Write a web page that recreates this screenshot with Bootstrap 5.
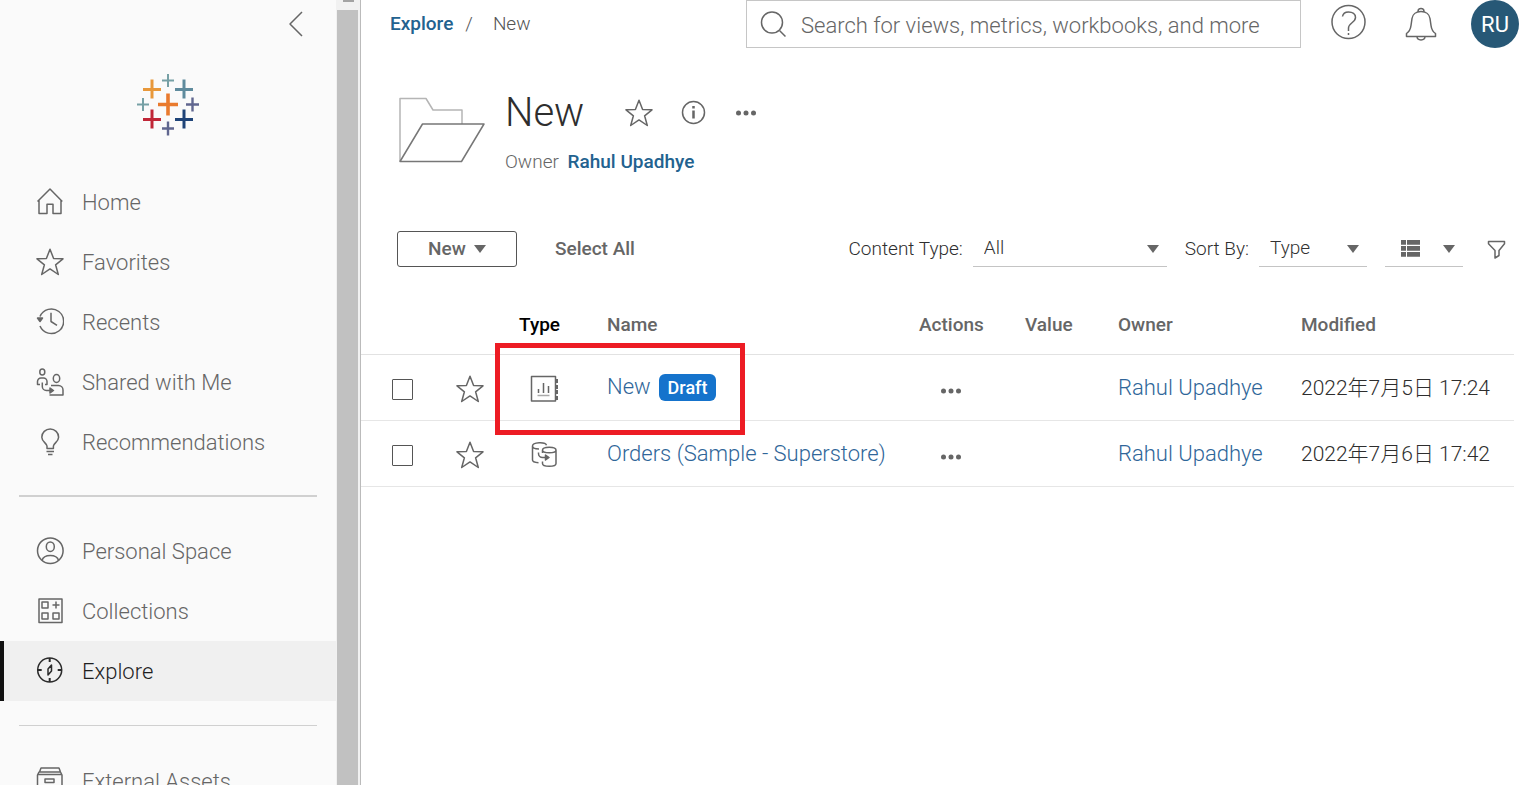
<!DOCTYPE html>
<html lang="en">
<head>
<meta charset="utf-8">
<meta name="viewport" content="width=device-width, initial-scale=1">
<title>Explore - New</title>
<link href="https://cdn.jsdelivr.net/npm/bootstrap@5.3.0/dist/css/bootstrap.min.css" rel="stylesheet">
<style>
  body { font-family: Roboto, "Noto Sans CJK JP", sans-serif; font-weight: 300; font-size: 20px; line-height: 24px; color: #2e2e2e; background: #fff; }
  a { color: #2f6699; text-decoration: none; }
  .ink { fill: none; stroke: #666; stroke-width: 1.5; stroke-linejoin: round; flex-shrink: 0; display: block; }
  .plain { background: none; border: 0; padding: 0; color: #666; }
  .shell { height: 100vh; }

  .side { width: 336px; background: #fafafa; }
  .side-head { height: 172px; padding: 10px 31px 0 18px; }
  .side-logo { margin: 35px 0 0 12px; }
  .side-link { height: 60px; padding-left: 36px; gap: 18px; color: #666; font-size: 22px; }
  .side-link span { padding-top: 2px; }
  .side-link.current { background: #f0f0f0; color: #1f1f1f; border-left: 4px solid #111; padding-left: 32px; }
  .side-link.current .ink { stroke: #2b2b2b; }
  .rule { height: 2px; margin: 23px 19px 24px; background: #d0d0d0; }
  .rule.thin { height: 1px; margin: 24px 19px 25px; }
  .track { width: 25px; background: #f1f1f1; border-right: 1px solid #bbb; }
  .track-arrow { height: 3px; width: 11px; margin: -1px 0 8px 7px; background: #a3a3a3; }
  .thumb { background: #c1c1c1; margin: 0 2px 0 1px; }

  .topbar { padding: 0 17px 0 29px; height: 48px; }
  .topbar .trail { gap: 12px; font-size: 19px; color: #555; }
  .strong-link { font-weight: 500; color: #23628f; }
  .search { flex: 0 1 555px; height: 48px; border: 1px solid #c6c6c6; padding: 0 12px; gap: 14px; }
  .search input { border: 0; outline: 0; background: none; font-size: 22px; font-weight: 300; min-width: 0; }
  .search input::placeholder { color: #666; opacity: 1; }
  .help { margin-left: 30px; }
  .bell { margin: 0 34px 0 37px; }
  .avatar { width: 48px; height: 48px; background: #275876; color: #fff; font-size: 22px; font-weight: 400; padding-top: 2px; }

  .heading { padding: 41px 36px 0 37px; gap: 19px; }
  .heading h1 { font-size: 40px; line-height: 48px; font-weight: 300; width: 80px; }
  .owner { font-size: 19px; color: #666; margin-top: 13px; }

  .tools { padding: 57px 30px 0 36px; font-size: 19px; }
  .new-btn { width: 120px; height: 36px; border: 1px solid #555; border-radius: 3px; background: #fff; }
  .semi { font-weight: 500; font-size: 19px; color: #666; }
  .select-all { margin-left: 38px; }
  .pick { appearance: none; height: 36px; margin: 0 18px 0 10px; border: 0; border-bottom: 1px solid #c4c4c4; border-radius: 0; padding: 0 24px 2px 11px; font-size: 19px; font-weight: 300; color: #333;
    background: #fff url("data:image/svg+xml,%3Csvg xmlns='http://www.w3.org/2000/svg' width='12' height='8'%3E%3Cpath d='M0 0h12L6 8z' fill='%23666'/%3E%3C/svg%3E") no-repeat right 8px center; }
  .pick-type { width: 194px; }
  .pick-sort { width: 108px; }
  .view-btn { width: 78px; height: 36px; border-bottom: 1px solid #c4c4c4; }

  .listing { margin: 27px 22px 0 0; }
  .files { table-layout: fixed; width: 100%; }
  .files th { height: 60px; padding-top: 3px; font-weight: 500; font-size: 19px; color: #666; border-bottom: 1px solid #e2e2e2; }
  .files td { height: 66px; font-size: 21px; border-bottom: 1px solid #e6e6e6; }
  .files td a { font-size: 22px; }
  .files input { appearance: none; display: block; width: 21px; height: 21px; margin: 4px auto 0; border: 1px solid #555; border-radius: 1px; background: #fff; }
  .row-dots { margin-left: 22px; }
  .files td.text-cell { padding-top: 2px; }
  .draft { background: #1573cc; color: #fff; font-size: 18px; font-weight: 500; line-height: 27px; border-radius: 6px; padding: 0 9px; }
  .callout { left: 134px; top: 49px; width: 250px; height: 92px; border: 5px solid #ed1c24; pointer-events: none; }
</style>
</head>
<body>
<svg width="0" height="0" class="position-absolute" aria-hidden="true">
  <symbol id="star" viewBox="0 0 28 28"><path d="M14 1.200l3.600 9.300 9.400.3-7.400 6 2.700 9.700-8.300-5.600-8.300 5.600 2.700-9.700-7.400-6 9.400-.3z"/></symbol>
  <symbol id="dots" viewBox="0 0 20 6"><g fill="#666" stroke="none"><circle cx="2.500" cy="3" r="2.500"/><circle cx="10" cy="3" r="2.500"/><circle cx="17.500" cy="3" r="2.500"/></g></symbol>
  <symbol id="caret" viewBox="0 0 12 8"><path d="M0 0h12L6 8z" fill="#666" stroke="none"/></symbol>
</svg>

<div class="shell d-flex overflow-hidden">
  <aside class="side flex-shrink-0">
    <div class="side-head d-flex flex-column">
      <button class="plain align-self-end" aria-label="Collapse menu"><svg class="ink" width="18" height="28" viewBox="0 0 18 28"><path d="M15 2L3 14l12 12"/></svg></button>
      <a href="#" class="side-logo align-self-center" aria-label="Tableau home">
        <svg class="d-block" width="64" height="64" viewBox="0 0 64 64" fill="none">
          <path d="M32 20.500v22M22 31.500h20" stroke="#e97a2e" stroke-width="3.600"/>
          <path d="M16 6.500v19M7 16.500h18" stroke="#e8983a" stroke-width="3"/>
          <path d="M48 6.500v19M39 16.500h18" stroke="#5f8b9d" stroke-width="3"/>
          <path d="M16 36.500v19M7 46.500h18" stroke="#c02637" stroke-width="3"/>
          <path d="M48 36.500v19M39 46.500h18" stroke="#1f4478" stroke-width="3"/>
          <path d="M32 1v13M26 7.500h12M7 25v13M1 31.500h12" stroke="#76a0a5" stroke-width="2"/>
          <path d="M56.500 24.500v14M50 31.500h13M32 48.500v14M26 55.500h12" stroke="#60668f" stroke-width="2.400"/>
        </svg>
      </a>
    </div>
    <nav>
      <a href="#" class="side-link d-flex align-items-center"><svg class="ink" width="28" height="28" viewBox="0 0 28 28"><path d="M1.500 13.500L14 1l12.300 12.500M3 12.500v13h8v-9.300h6v9.300h8v-13"/></svg><span>Home</span></a>
      <a href="#" class="side-link d-flex align-items-center"><svg class="ink" width="28" height="28"><use href="#star"/></svg><span>Favorites</span></a>
      <a href="#" class="side-link d-flex align-items-center"><svg class="ink" width="28" height="28" viewBox="0 0 28 28"><path d="M4 8.500a12.300 12.300 0 1 1 0 9.500M15 4.800V13.500l6 3.800"/><path d="M1.500 10h5L4 13.500z" fill="#666"/></svg><span>Recents</span></a>
      <a href="#" class="side-link d-flex align-items-center"><svg class="ink" width="28" height="28" viewBox="0 0 28 28"><ellipse cx="6.300" cy="4" rx="2.500" ry="3"/><path d="M4 16.500H1.500v-3a3.500 3.500 0 0 1 3.500-3.500h2.500a3.500 3.500 0 0 1 3.500 3.500v3H9M6.300 14.500v4a4 4 0 0 0 4 4H16"/><path d="M14 20l3.500 2.500L14 25z" fill="#666"/><ellipse cx="20.500" cy="10.500" rx="3.200" ry="4"/><path d="M15 17.500h7.500a4.500 4.500 0 0 1 4.500 4.500v5H13.500"/></svg><span>Shared with Me</span></a>
      <a href="#" class="side-link d-flex align-items-center"><svg class="ink" width="28" height="28" viewBox="0 0 28 28"><path d="M11 20.500V18C10.500 15 5.800 13.500 5.800 9.200a8.400 8.200 0 0 1 16.800 0c0 4.300-4.700 5.800-5.200 8.800v2.500zM10.500 23.500h7.500M12 26.500h4.500"/></svg><span>Recommendations</span></a>
      <div class="rule"></div>
      <a href="#" class="side-link d-flex align-items-center"><svg class="ink" width="28" height="28" viewBox="0 0 28 28"><circle cx="14.300" cy="13.700" r="12.800"/><ellipse cx="14.300" cy="9.700" rx="4" ry="4.800"/><path d="M6 23.500c1-3.500 4-5 8.300-5s7.300 1.500 8.300 5"/></svg><span>Personal Space</span></a>
      <a href="#" class="side-link d-flex align-items-center"><svg class="ink" width="28" height="28" viewBox="0 0 28 28"><path d="M3 2h23v23.500H3zM6 5h6v6H6zM6 16h6v6H6zM17 16h6v6h-6zM20 4.500v7M16.500 8h7"/></svg><span>Collections</span></a>
      <a href="#" class="side-link current d-flex align-items-center" aria-current="page"><svg class="ink" width="28" height="28" viewBox="0 0 28 28"><circle cx="13.700" cy="13" r="12"/><path d="M13.700 1v4M13.700 21v4M1.700 13h4M21.700 13h4" stroke-width="2"/><path d="M12 12l3.500-4v6L12 18z"/></svg><span>Explore</span></a>
      <div class="rule thin"></div>
      <a href="#" class="side-link d-flex align-items-center"><svg class="ink" width="28" height="28" viewBox="0 0 28 28"><path d="M3.500 5L5 1h18l1.500 4M3 5h21.500L26 8v17.500H1.500V8zM1.500 7.500H26M9 12h9v3.500H9z"/></svg><span>External Assets</span></a>
    </nav>
  </aside>
  <div class="track d-flex flex-column flex-shrink-0" aria-hidden="true"><div class="track-arrow"></div><div class="thumb flex-grow-1"></div></div>

  <main class="flex-grow-1">
    <header class="topbar d-flex align-items-center">
      <nav class="trail d-flex" aria-label="Breadcrumb"><a href="#" class="strong-link">Explore</a><span>/</span><span class="ms-2">New</span></nav>
      <label class="search d-flex align-items-center ms-auto"><svg class="ink" width="28" height="28" viewBox="0 0 28 28"><circle cx="13" cy="12.500" r="10.500"/><path d="M20.500 20.500l6 6"/></svg><input type="text" class="flex-grow-1 p-0 pt-1" placeholder="Search for views, metrics, workbooks, and more" aria-label="Search"></label>
      <div class="d-flex align-items-center flex-shrink-0">
        <button class="plain help" aria-label="Help"><svg class="ink" width="37" height="40" viewBox="0 0 37 40"><circle cx="17.500" cy="18" r="16.500"/><path d="M11.500 12.500c.5-3 3-4.500 6-4.500 4 0 7 2 7 5.500 0 5-7 5.500-7 10.500v3M17.500 29v2"/></svg></button>
        <button class="plain bell" aria-label="Notifications"><svg class="ink" width="32" height="36" viewBox="0 0 32 36"><path d="M1.500 30.500v-3c3-2 4-4 4.500-8l1-7c.5-4 4-7 9-7s8.500 3 9 7l1 7c.5 4 1.500 6 4.500 8v3zM13 5.500C13 1.500 19 1.500 19 5.500M12 30.500c0 4.500 8 4.500 8 0"/></svg></button>
        <button class="plain avatar rounded-circle">RU</button>
      </div>
    </header>

    <section class="heading d-flex">
      <svg class="ink mt-2" width="88" height="68" viewBox="0 0 88 68"><path d="M2 64V1.500h26L35 13h29v14" stroke="#b5b5b5"/><path d="M2 64.500l22.500-37.500H86L63.500 64.500z" stroke="#777"/></svg>
      <div>
        <div class="d-flex align-items-center">
          <h1 class="m-0">New</h1>
          <button class="plain ms-4 ps-3" aria-label="Favorite"><svg class="ink" width="28" height="28"><use href="#star"/></svg></button>
          <button class="plain ms-4" aria-label="Details"><svg class="ink ms-1" width="27" height="26" viewBox="0 0 27 26"><circle cx="12.500" cy="12.500" r="11"/><path d="M12.500 10.500v8M12.500 6v2.500" stroke-width="2.500"/></svg></button>
          <button class="plain ms-4" aria-label="More actions"><svg class="ink ms-1" width="20" height="6"><use href="#dots"/></svg></button>
        </div>
        <div class="owner">Owner <a href="#" class="strong-link ms-1">Rahul Upadhye</a></div>
      </div>
    </section>

    <section class="tools d-flex align-items-center">
      <button class="new-btn semi d-flex align-items-center justify-content-center gap-2">New<svg width="12" height="8"><use href="#caret"/></svg></button>
      <button class="plain semi select-all text-nowrap">Select All</button>
      <div class="d-flex align-items-center ms-auto">
        <label for="ctype">Content Type:</label>
        <select id="ctype" class="pick pick-type"><option>All</option></select>
        <label for="sort">Sort By:</label>
        <select id="sort" class="pick pick-sort"><option>Type</option></select>
        <button class="plain view-btn d-flex align-items-center justify-content-between ps-3 pe-2" aria-label="View as list"><svg width="19" height="17" viewBox="0 0 19 17" fill="#666"><path d="M0 0h5v4.700H0zM6 0h13v4.700H6zM0 6h5v4.700H0zM6 6h13v4.700H6zM0 12h5v4.700H0zM6 12h13v4.700H6z"/></svg><svg width="12" height="8"><use href="#caret"/></svg></button>
        <button class="plain ms-4" aria-label="Filter"><svg class="ink" width="19" height="19" viewBox="0 0 19 19"><path d="M1.500 1.500h16v2.300L12 10.500v5L8 18v-7.500L1.500 3.800z"/></svg></button>
      </div>
    </section>

    <section class="listing position-relative">
      <table class="files">
        <colgroup><col style="width:83px"><col style="width:51px"><col style="width:111px"><col><col style="width:106px"><col style="width:93px"><col style="width:183px"><col style="width:214px"></colgroup>
        <thead><tr><th></th><th></th><th class="ps-4 text-black">Type</th><th>Name</th><th>Actions</th><th>Value</th><th>Owner</th><th>Modified</th></tr></thead>
        <tbody>
          <tr>
            <td><input type="checkbox" aria-label="Select New"></td>
            <td><button class="plain d-block mx-auto" aria-label="Favorite New"><svg class="ink mt-1" width="28" height="28"><use href="#star"/></svg></button></td>
            <td><svg class="ink ms-4 mt-1" width="38" height="28" viewBox="-10 0 38 28"><path d="M1.500 1.500h24v24.500h-24z"/><path d="M27 4v4M27 10v4M27 15v4M27 21v4" stroke-width="2.500"/><path d="M8.500 18v-4M13.500 18V8M18.500 18v-7" stroke-width="1.500"/><path d="M7.500 20.500h12" stroke="#aaa"/></svg></td>
            <td class="text-cell"><a href="#">New</a><span class="draft d-inline-block ms-2">Draft</span></td>
            <td><button class="plain d-block row-dots" aria-label="Actions for New"><svg class="ink mt-2" width="20" height="6"><use href="#dots"/></svg></button></td>
            <td></td><td class="text-cell"><a href="#">Rahul Upadhye</a></td><td class="text-cell">2022年7月5日 17:24</td>
          </tr>
          <tr>
            <td><input type="checkbox" aria-label="Select Orders"></td>
            <td><button class="plain d-block mx-auto" aria-label="Favorite Orders"><svg class="ink mt-1" width="28" height="28"><use href="#star"/></svg></button></td>
            <td><svg class="ink ms-4 mt-1" width="38" height="28" viewBox="-10 0 38 28"><path d="M2.500 5v14c0 1.500 2.500 2.500 6 2.700M2.500 5c0-4 13-4.500 14-.8M2.500 5c0 2 3 3 6.500 3M12.500 12V9c0-3.700 13.500-3.700 13.500 0v13.500c0 3.700-13.500 3.700-13.500 0V20.500M12.500 9c0 3.700 13.500 3.700 13.500 0M8.500 11.500v1c0 2.500 2 4 4 4h5"/><path d="M15.500 14l3.500 2.500-3.500 2.500z" fill="#666"/></svg></td>
            <td class="text-cell"><a href="#">Orders (Sample - Superstore)</a></td>
            <td><button class="plain d-block row-dots" aria-label="Actions for Orders"><svg class="ink mt-2" width="20" height="6"><use href="#dots"/></svg></button></td>
            <td></td><td class="text-cell"><a href="#">Rahul Upadhye</a></td><td class="text-cell">2022年7月6日 17:42</td>
          </tr>
        </tbody>
      </table>
      <div class="callout position-absolute"></div>
    </section>
  </main>
</div>
<script src="https://cdn.jsdelivr.net/npm/bootstrap@5.3.0/dist/js/bootstrap.bundle.min.js"></script>
</body>
</html>
